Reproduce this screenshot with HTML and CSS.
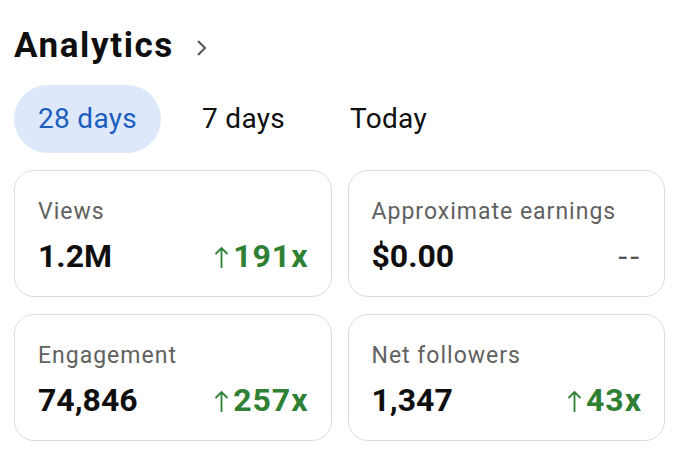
FILE: index.html
```html
<!DOCTYPE html>
<html lang="en">
<head>
    <meta charset="UTF-8">
    <meta name="viewport" content="width=device-width, initial-scale=1.0">
    <title>Analytics</title>
    <link rel="stylesheet" href="styles.css">
</head>
<body>
    <div class="analytics">
        <h1 class="title">
            Analytics
            <svg class="chevron" width="12" height="18" viewBox="0 0 12 18">
                <path d="M2 2 L9 9 L2 16" fill="none" stroke="#555" stroke-width="2"/>
            </svg>
        </h1>

        <div class="periods">
            <div class="period active">28 days</div>
            <div class="period">7 days</div>
            <div class="period">Today</div>
        </div>

        <div class="cards">
            <div class="card">
                <div class="label">Views</div>
                <div class="row">
                    <div class="value">1.2M</div>
                    <div class="change up">
                        <svg class="arrow" width="15" height="22" viewBox="0 0 15 22">
                            <path d="M7.5 2 V22 M1.5 8 L7.5 2 L13.5 8" fill="none" stroke="currentColor" stroke-width="1.8"/>
                        </svg>191x
                    </div>
                </div>
            </div>
            <div class="card">
                <div class="label">Approximate earnings</div>
                <div class="row">
                    <div class="value">$0.00</div>
                    <div class="change none">--</div>
                </div>
            </div>
            <div class="card">
                <div class="label">Engagement</div>
                <div class="row">
                    <div class="value">74,846</div>
                    <div class="change up">
                        <svg class="arrow" width="15" height="22" viewBox="0 0 15 22">
                            <path d="M7.5 2 V22 M1.5 8 L7.5 2 L13.5 8" fill="none" stroke="currentColor" stroke-width="1.8"/>
                        </svg>257x
                    </div>
                </div>
            </div>
            <div class="card">
                <div class="label">Net followers</div>
                <div class="row">
                    <div class="value">1,347</div>
                    <div class="change up">
                        <svg class="arrow" width="15" height="22" viewBox="0 0 15 22">
                            <path d="M7.5 2 V22 M1.5 8 L7.5 2 L13.5 8" fill="none" stroke="currentColor" stroke-width="1.8"/>
                        </svg>43x
                    </div>
                </div>
            </div>
        </div>
    </div>
</body>
</html>
```

FILE: styles.css
```css
body {
    margin: 0;
    background: #fff;
    font-family: Roboto, "Liberation Sans", sans-serif;
    color: #0f0f0f;
}
.analytics {
    padding: 25px 25px 0 14px;
}
.title {
    display: flex;
    align-items: center;
    gap: 22px;
    margin: 0;
    font-size: 35px;
    line-height: 42px;
    font-weight: 700;
    letter-spacing: 1.6px;
}
.chevron {
    margin-top: 3px;
}
.periods {
    display: flex;
    gap: 17px;
    margin-top: 18px;
}
.period {
    height: 68px;
    line-height: 68px;
    padding: 0 24px;
    border-radius: 34px;
    font-size: 28px;
    letter-spacing: 0.3px;
}
.period.active {
    background: #dde8fa;
    color: #1c5ebf;
}
.cards {
    display: grid;
    grid-template-columns: 1fr 1fr;
    gap: 17px 16px;
    margin-top: 17px;
}
.card {
    border: 1.5px solid #dcdcdc;
    border-radius: 20px;
    padding: 27px 22px 21px 23px;
}
.label {
    font-size: 23px;
    line-height: 28px;
    letter-spacing: 1px;
    color: #616161;
}
.row {
    display: flex;
    justify-content: space-between;
    align-items: baseline;
    margin-top: 11px;
    line-height: 38px;
}
.value {
    font-size: 32px;
    font-weight: 700;
}
.change {
    font-size: 32px;
    font-weight: 700;
    letter-spacing: 1px;
}
.change.up {
    color: #2f8035;
}
.change.none {
    font-weight: 400;
    color: #555;
    letter-spacing: 3px;
}
.arrow {
    margin-right: 4px;
    vertical-align: -1px;
}
```
